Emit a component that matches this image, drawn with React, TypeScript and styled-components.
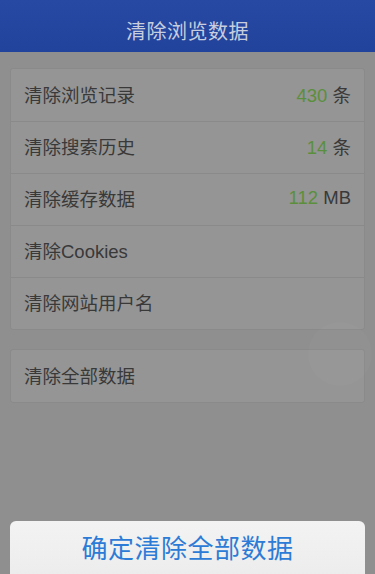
import styled, { createGlobalStyle } from "styled-components";

const ITEMS = [
  { label: "清除浏览记录", count: "430", unit: "条" },
  { label: "清除搜索历史", count: "14", unit: "条" },
  { label: "清除缓存数据", count: "112", unit: "MB" },
  { label: "清除Cookies" },
  { label: "清除网站用户名" },
];

const GlobalStyle = createGlobalStyle`
  html, body {
    margin: 0;
    padding: 0;
    background: #8f8f8f;
  }
  body {
    font-family: "Liberation Sans", "Noto Sans CJK SC", sans-serif;
  }
`;

/**
 * 清除浏览数据 (确认弹层打开状态)
 */
function App() {
  return (
    <>
      <GlobalStyle />
      <Page>
        <Header>清除浏览数据</Header>

        <Content>
          <Card>
            {ITEMS.map(({ label, count, unit }) => (
              <Row key={label}>
                <Label>{label}</Label>
                {count && (
                  <Value>
                    <Count>{count}</Count> {unit}
                  </Value>
                )}
              </Row>
            ))}
          </Card>

          <Card>
            <Row>
              <Label>清除全部数据</Label>
            </Row>
          </Card>
        </Content>

        <Sheet>
          <ConfirmButton>确定清除全部数据</ConfirmButton>
        </Sheet>

        <TouchDot />
      </Page>
    </>
  );
}

export default App;

const Page = styled.div`
  position: relative;
  width: 375px;
  height: 574px;
  overflow: hidden;
  background: #8f8f8f;
  display: flex;
  flex-direction: column;
`;

const Header = styled.div`
  height: 52px;
  box-sizing: border-box;
  padding-top: 9px;
  display: flex;
  align-items: center;
  justify-content: center;

  background: linear-gradient(#2749a3, #22439c);
  color: #c9cede;
  font-size: 20px;
  letter-spacing: 0.5px;
`;

const Content = styled.div`
  padding: 16px 10px 0;
  display: flex;
  flex-direction: column;
  gap: 19px;
`;

const Card = styled.div`
  background: #959595;
  border: 1px solid #8a8a8a;
  border-radius: 3px;
`;

const Row = styled.div`
  height: 52px;
  box-sizing: border-box;
  padding: 0 13px 3px;
  display: flex;
  align-items: center;
  justify-content: space-between;

  & + & {
    border-top: 1px solid #8a8a8a;
  }
`;

const Label = styled.span`
  color: #393939;
  font-size: 18.5px;
`;

const Value = styled.span`
  color: #393939;
  font-size: 18.5px;
`;

const Count = styled.span`
  color: #5b8f3c;
`;

const Sheet = styled.div`
  margin-top: auto;
  padding: 0 10px;
`;

const ConfirmButton = styled.button`
  width: 100%;
  height: 58px;
  margin-bottom: -5px;
  padding: 0 0 8px;
  border: none;
  border-radius: 6px;
  background: linear-gradient(#f3f3f3, #ececec);

  color: #2c7bd6;
  font-family: "Liberation Sans", "Noto Sans CJK SC", sans-serif;
  font-size: 26px;
  letter-spacing: 0.5px;
  cursor: pointer;
`;

const TouchDot = styled.div`
  position: absolute;
  left: 308px;
  top: 322px;
  width: 64px;
  height: 64px;
  border-radius: 50%;
  background: rgba(255, 255, 255, 0.018);
`;
